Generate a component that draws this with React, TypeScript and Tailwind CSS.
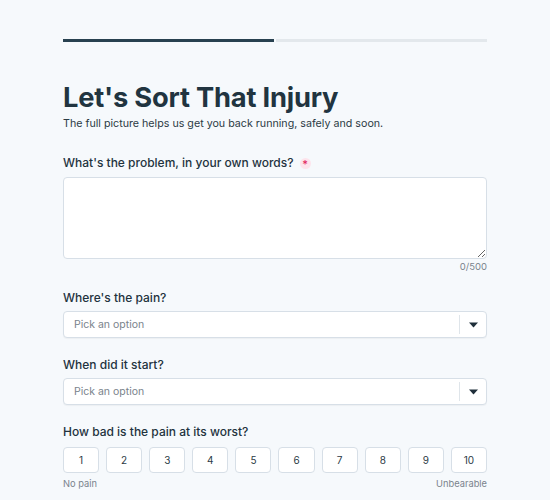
import React from "react";

function Select() {
  return (
    <div className="flex h-[27px] items-center rounded-[4px] border border-[#d7dfe7] bg-white shadow-[0_1px_1px_rgba(0,0,0,0.04)]">
      <span className="flex-1 pl-[10px] text-[10.5px] text-[#7a838c]">Pick an option</span>
      <span className="h-[19px] w-px bg-[#dfe5ea]" />
      <span className="flex w-[26px] justify-center">
        <svg width="9" height="6" viewBox="0 0 9 6">
          <path d="M0 0.5 L9 0.5 L4.5 5.5 Z" fill="#1f2f3a" />
        </svg>
      </span>
    </div>
  );
}

export default function App() {
  const nums = [1, 2, 3, 4, 5, 6, 7, 8, 9, 10];
  return (
    <div
      className="min-h-screen bg-[#f6f9fc] px-[63px] pt-[39px] text-[#1f2f3a]"
      style={{ fontFamily: "Inter, 'Noto Sans', sans-serif" }}
    >
      <div className="flex h-[3px] gap-[2px]">
        <div className="flex-1 bg-[#284150]" />
        <div className="flex-1 bg-[#e3e8ec]" />
      </div>

      <h1 className="mt-[39px] text-[27.3px] font-bold leading-[34px] tracking-[-0.2px] text-[#213440]">
        Let's Sort That Injury
      </h1>
      <p className="text-[10.7px] leading-[18px] text-[#2c3b45]">
        The full picture helps us get you back running, safely and soon.
      </p>

      <div className="mt-[20px] flex items-center text-[12px] font-medium leading-[20px] text-[#23333e]">
        What's the problem, in your own words?
        <span className="ml-[6px] flex h-[11px] w-[11px] items-center justify-center rounded-full bg-[#fde4ec] text-[11px] leading-none text-[#e11d5c]">
          <span className="mt-[3px]">*</span>
        </span>
      </div>
      <textarea className="mt-[4px] block h-[82px] w-full rounded-[4px] border border-[#d7dfe7] bg-white outline-none" />
      <div className="text-right text-[9.5px] leading-[16px] text-[#7a838c]">0/500</div>

      <div className="mt-[13px] text-[12px] font-medium leading-[20px] text-[#23333e]">Where's the pain?</div>
      <div className="mt-[3px]">
        <Select />
      </div>

      <div className="mt-[17px] text-[12px] font-medium leading-[20px] text-[#23333e]">When did it start?</div>
      <div className="mt-[3px]">
        <Select />
      </div>

      <div className="mt-[17px] text-[12px] font-medium leading-[20px] text-[#23333e]">
        How bad is the pain at its worst?
      </div>
      <div className="mt-[5px] grid grid-cols-10 gap-[7px]">
        {nums.map((n) => (
          <div
            key={n}
            className="flex h-[26px] items-center justify-center rounded-[4px] border border-[#d7dfe7] bg-white text-[10px] text-[#2c3b45]"
          >
            {n}
          </div>
        ))}
      </div>
      <div className="mt-[3px] flex justify-between text-[9.3px] leading-[16px] text-[#7a838c]">
        <span>No pain</span>
        <span>Unbearable</span>
      </div>
    </div>
  );
}
